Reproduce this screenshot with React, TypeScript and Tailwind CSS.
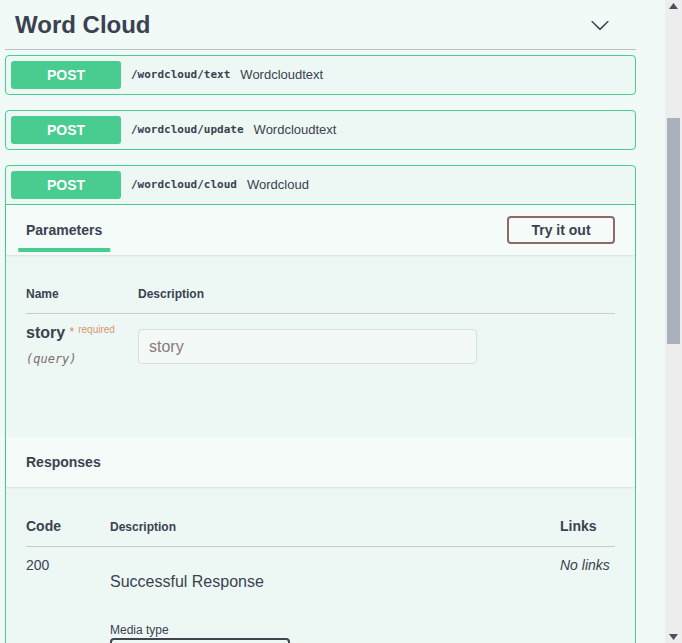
import React from "react";

const sans = { fontFamily: '"Liberation Sans", Arial, sans-serif' };

function Chevron() {
  return (
    <svg width="20" height="20" viewBox="0 0 20 20" className="block">
      <path
        fill="#3b4151"
        d="M17.418 6.109c.272-.268.709-.268.979 0s.271.701 0 .969l-7.908 7.83c-.27.268-.707.268-.979 0l-7.908-7.830c-.27-.268-.27-.701 0-.969.271-.268.709-.268.979 0L10 13.25l7.418-7.141z"
      />
    </svg>
  );
}

function Summary({ path, summary }: { path: string; summary: string }) {
  return (
    <div className="flex items-center h-[38px] px-[5px]">
      <div className="w-[110px] h-[28px] rounded-[3px] bg-[#49cc90] flex items-center justify-center text-white font-bold text-[14px]">
        POST
      </div>
      <span className="ml-[10px] text-[11px] font-bold text-[#3b4151] font-['DejaVu_Sans_Mono',monospace]">
        {path}
      </span>
      <span className="ml-[10px] text-[13px] text-[#3b4151]">{summary}</span>
    </div>
  );
}

export default function App() {
  return (
    <div
      className="w-full h-[643px] overflow-hidden bg-[#f1faf6] flex text-[#3b4151]"
      style={sans}
    >
      <div className="w-[631px] ml-[5px] shrink-0">
        <div className="h-[50px] border-b border-[#b9bec3] flex items-center justify-between pl-[10px] pr-[26px] mb-[5px]">
          <span className="text-[24px] font-bold leading-none text-[#3b4151]">Word Cloud</span>
          <Chevron />
        </div>

        <div className="border border-[#49cc90] rounded-[4px] bg-[#edf8f4] mb-[15px]">
          <Summary path="/wordcloud/text" summary="Wordcloudtext" />
        </div>
        <div className="border border-[#49cc90] rounded-[4px] bg-[#edf8f4] mb-[15px]">
          <Summary path="/wordcloud/update" summary="Wordcloudtext" />
        </div>

        <div className="border border-[#49cc90] rounded-t-[4px] bg-[#edf8f4] h-[500px]">
          <Summary path="/wordcloud/cloud" summary="Wordcloud" />
          <div className="border-t border-[#49cc90]">
            <div className="h-[50px] px-5 flex items-center justify-between bg-[#f4fbf8] shadow-[0_1px_2px_rgba(0,0,0,0.1)] relative">
              <div className="relative">
                <span className="text-[14px] font-bold text-[#3b4151]">Parameters</span>
                <div className="absolute left-1/2 -translate-x-1/2 w-[120%] h-[4px] bg-[#49cc90] top-[30px]" />
              </div>
              <button className="w-[108px] h-[28px] border-2 border-[#8c6a66] rounded-[4px] text-[14px] font-bold text-[#3b4151]">
                Try it out
              </button>
            </div>
            <div className="h-[182px] px-5 pt-[20px]">
              <div className="flex h-[39px] items-center border-b border-[#c7cbd0] text-[12px] font-bold text-[#3b4151]">
                <div className="w-[112px]">Name</div>
                <div>Description</div>
              </div>
              <div className="flex">
                <div className="w-[112px] pt-[9px]">
                  <div className="leading-[20px] flex items-start">
                    <span className="text-[16px] font-bold text-[#3b4151]">story</span>
                    <span className="text-[13px] text-[#e08a6a] ml-[4px] leading-[16px] mt-[1px]">*</span>
                    <span className="text-[10px] text-[#d9956f] ml-[4px] leading-[12px] mt-[1px]">required</span>
                  </div>
                  <div className="mt-[8px] text-[12px] leading-[16px] italic text-[#7d6e6b] font-['DejaVu_Sans_Mono',monospace]">
                    (query)
                  </div>
                </div>
                <div className="pt-[15px]">
                  <div className="w-[339px] h-[35px] border border-[#d9dde0] rounded-[4px] bg-[#f3f9f7] flex items-center px-[10px] text-[16px] text-[#8c7a76]">
                    story
                  </div>
                </div>
              </div>
            </div>
            <div className="h-[50px] px-5 flex items-center bg-[#f4fbf8] shadow-[0_1px_2px_rgba(0,0,0,0.1)] relative">
              <span className="text-[14px] font-bold text-[#3b4151]">Responses</span>
            </div>
            <div className="px-5 pt-[20px]">
              <div className="flex h-[40px] items-center border-b border-[#c7cbd0] text-[#3b4151]">
                <div className="w-[84px] text-[14px] font-bold">Code</div>
                <div className="flex-1 text-[12px] font-bold">Description</div>
                <div className="w-[55px] text-[14px] font-bold">Links</div>
              </div>
              <div className="flex">
                <div className="w-[84px] pt-[8px] text-[14px] leading-[20px]">200</div>
                <div className="flex-1">
                  <div className="mt-[25px] text-[16px] leading-[20px]">Successful Response</div>
                  <div className="mt-[30px] text-[12px] leading-[16px]">Media type</div>
                  <div className="w-[180px] h-[36px] border-2 border-[#41444e] rounded-[4px]" />
                </div>
                <div className="w-[55px] pt-[8px] text-[14px] leading-[20px] italic">No links</div>
              </div>
            </div>
          </div>
        </div>
      </div>

      <div className="ml-auto w-[17px] h-full bg-[#ededed] flex flex-col items-center shrink-0">
        <div className="h-[17px] flex items-start justify-center pt-[3px]">
          <svg width="9" height="6" viewBox="0 0 9 6">
            <path d="M0 6 L4.5 0 L9 6 Z" fill="#4a5060" />
          </svg>
        </div>
        <div className="mt-[101px] w-[13px] h-[226px] bg-[#a9b1bb]" />
        <div className="mt-auto h-[17px] flex items-end justify-center pb-[3px]">
          <svg width="9" height="6" viewBox="0 0 9 6">
            <path d="M0 0 L9 0 L4.5 6 Z" fill="#4a5060" />
          </svg>
        </div>
      </div>
    </div>
  );
}
